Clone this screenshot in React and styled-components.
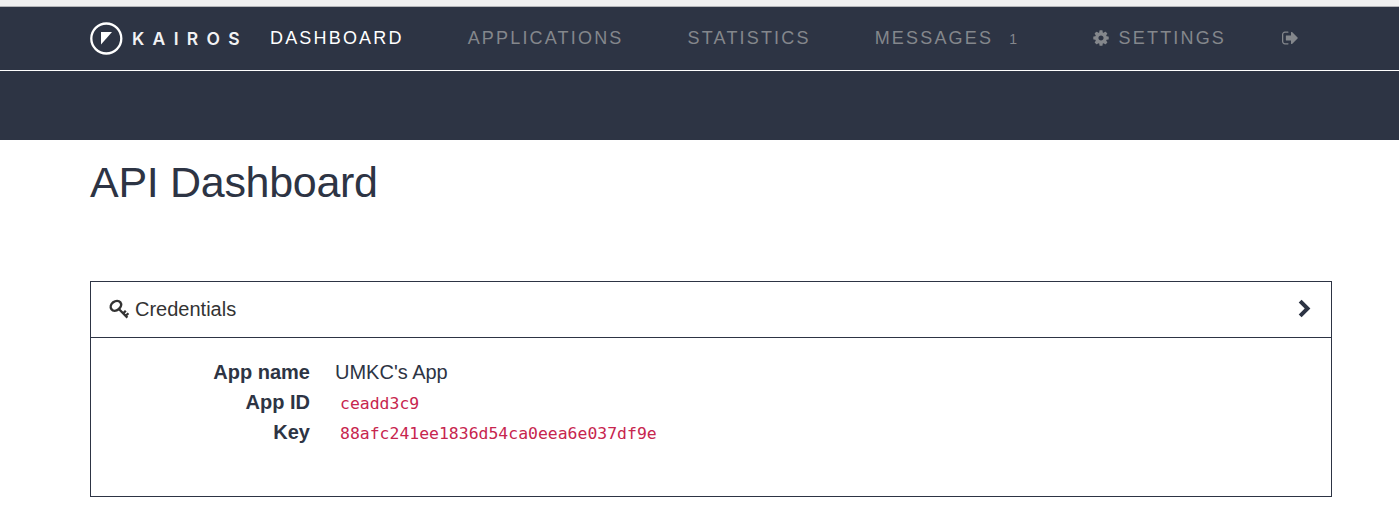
import React from "react";
import styled, { createGlobalStyle } from "styled-components";

const Global = createGlobalStyle`
  * { box-sizing: border-box; }
  body {
    margin: 0;
    background: #fff;
    color: #2d3444;
    font: 20px/30px "Liberation Sans", Arial, sans-serif;
    overflow: hidden;
  }
`;

const Page = styled.div`
  height: 511px;
  overflow: hidden;
`;

const BrowserEdge = styled.div`
  height: 7px;
  background: #f0f0f0;
  border-bottom: 1px solid #b4b5b8;
`;

const Navbar = styled.header`
  height: 64px;
  padding-left: 90px;
  display: flex;
  align-items: flex-start;
  background: #2d3444;
  border-bottom: 1px solid #fff;
`;

const SubBar = styled.div`
  height: 69px;
  background: #2d3444;
`;

const Brand = styled.a`
  width: 180px;
  height: 63px;
  display: flex;
  align-items: center;
  color: #fff;
`;

const BrandMark = styled.svg`
  width: 33px;
  height: 33px;
  margin-right: 9px;
  flex: none;
`;

const BrandName = styled.span`
  font: 600 17.5px/24px Inter, sans-serif;
  letter-spacing: 8.3px;
  color: #f2f2f4;
`;

const NavItem = styled.a`
  display: flex;
  align-items: center;
  height: 62px;
  margin-right: ${(p) => p.$gap || 0}px;
  font-size: 18px;
  letter-spacing: 2.18px;
  white-space: nowrap;
  color: ${(p) => (p.$active ? "#fff" : "#84878c")};
`;

const Badge = styled.span`
  margin: 2px 0 0 16px;
  font-size: 14px;
`;

const Icon = styled.svg`
  width: ${(p) => p.$size}px;
  height: ${(p) => p.$size}px;
  margin-right: ${(p) => p.$gap || 0}px;
  fill: currentColor;
  flex: none;
`;

const Main = styled.main`
  padding: 0 67px 0 90px;
`;

const Title = styled.h1`
  margin: 0;
  padding-top: 18px;
  height: 141px;
  font-size: 43px;
  letter-spacing: -0.3px;
  line-height: 48px;
  font-weight: 400;
`;

const Panel = styled.section`
  height: 216px;
  border: 1px solid #2d3444;
`;

const PanelHeading = styled.div`
  height: 56px;
  padding: 0 20px 2px 18px;
  display: flex;
  align-items: center;
  color: #333;
  border-bottom: 1px solid #2d3444;
`;

const Chevron = styled.svg`
  width: 13px;
  height: 19px;
  margin-left: auto;
  fill: #2d3444;
`;

const Details = styled.dl`
  margin: 0;
  padding-top: 19px;
  display: grid;
  grid-template-columns: 219px 1fr;
  column-gap: 25px;
  grid-auto-rows: 30px;
`;

const Term = styled.dt`
  font-weight: 700;
  text-align: right;
`;

const Value = styled.dd`
  margin: 0;
`;

const Code = styled.code`
  display: block;
  padding: 2px 0 0 5px;
  font: 16.44px/30px "DejaVu Sans Mono", monospace;
  color: #c7254e;
`;

const COG =
  "M1152 896q0-106-75-181t-181-75-181 75-75 181 75 181 181 75 181-75 75-181zm512-109v222q0 12-8 23t-20 13l-185 28q-19 54-39 91 35 50 107 138 10 12 10 25t-9 23q-27 37-99 108t-94 71q-12 0-26-9l-138-108q-44 23-91 38-16 136-29 186-7 28-36 28h-222q-14 0-24.5-8.5t-11.5-21.5l-28-184q-49-16-90-37l-141 107q-10 9-25 9-14 0-25-11-126-114-165-168-7-10-7-23 0-12 8-23 15-21 51-66.5t54-70.5q-27-50-41-99l-183-27q-13-2-21-12.5t-8-23.5v-222q0-12 8-23t19-13l186-28q14-46 39-92-40-57-107-138-10-12-10-24 0-10 9-23 26-36 98.5-107.5t94.5-71.5q13 0 26 10l138 107q44-23 91-38 16-136 29-186 7-28 36-28h222q14 0 24.5 8.5t11.5 21.5l28 184q49 16 90 37l142-107q9-9 24-9 13 0 25 10 129 119 165 170 7 8 7 22 0 12-8 23-15 21-51 66.5t-54 70.5q26 50 41 98l183 28q13 2 21 12.5t8 23.5z";
const SIGN_OUT =
  "M640 1440q0 4 1 20t.5 26.5-3 23.5-10 19.5-20.5 6.5h-320q-119 0-203.5-84.5t-84.5-203.5v-704q0-119 84.5-203.5t203.5-84.5h320q13 0 22.5 9.5t9.5 22.5q0 4 1 20t.5 26.5-3 23.5-10 19.5-20.5 6.5h-320q-66 0-113 47t-47 113v704q0 66 47 113t113 47h312l11.5 1 11.5 3 8 5.5 7 9 2 13.5zm928-544q0 26-19 45l-544 544q-19 19-45 19t-45-19-19-45v-288h-448q-26 0-45-19t-19-45v-384q0-26 19-45t45-19h448v-288q0-26 19-45t45-19 45 19l544 544q19 19 19 45z";

export default function App() {
  return (
    <Page>
      <Global />
      <BrowserEdge />
      <Navbar>
        <Brand>
          <BrandMark viewBox="0 0 33 33">
            <circle cx="16.3" cy="16.5" r="15" fill="none" stroke="#fff" strokeWidth="2.3" />
            <path d="M11 10H22L11 22.5Z" fill="#fff" />
          </BrandMark>
          <BrandName>KAIROS</BrandName>
        </Brand>
        <NavItem $active $gap={64}>DASHBOARD</NavItem>
        <NavItem $gap={64}>APPLICATIONS</NavItem>
        <NavItem $gap={64}>STATISTICS</NavItem>
        <NavItem $gap={73}>
          MESSAGES<Badge>1</Badge>
        </NavItem>
        <NavItem $gap={56}>
          <Icon viewBox="0 0 1792 1792" $size={18} $gap={8.5}>
            <path d={COG} />
          </Icon>
          SETTINGS
        </NavItem>
        <NavItem>
          <Icon viewBox="0 0 1792 1792" $size={18}>
            <path d={SIGN_OUT} />
          </Icon>
        </NavItem>
      </Navbar>
      <SubBar />
      <Main>
        <Title>API Dashboard</Title>
        <Panel>
          <PanelHeading>
            <Icon viewBox="0 0 20 20" $size={20} $gap={6}>
              <ellipse
                cx="6.9" cy="6.8" rx="5.6" ry="4.4"
                transform="rotate(-38 6.9 6.8)"
                fill="none" stroke="currentColor" strokeWidth="2.5"
              />
              <path
                d="M9.6 9.8L18.4 18.6M14.2 14.4L16.8 11.8M16.8 16.8L19.4 14.2"
                fill="none" stroke="currentColor" strokeWidth="2.3"
              />
            </Icon>
            Credentials
            <Chevron viewBox="0 0 13 19">
              <path d="M3.6 0.8L12.4 9.5L3.6 18.2L0.7 15.4L6.7 9.5L0.7 3.6Z" />
            </Chevron>
          </PanelHeading>
          <Details>
            <Term>App name</Term>
            <Value>UMKC's App</Value>
            <Term>App ID</Term>
            <Value><Code>ceadd3c9</Code></Value>
            <Term>Key</Term>
            <Value><Code>88afc241ee1836d54ca0eea6e037df9e</Code></Value>
          </Details>
        </Panel>
      </Main>
    </Page>
  );
}
